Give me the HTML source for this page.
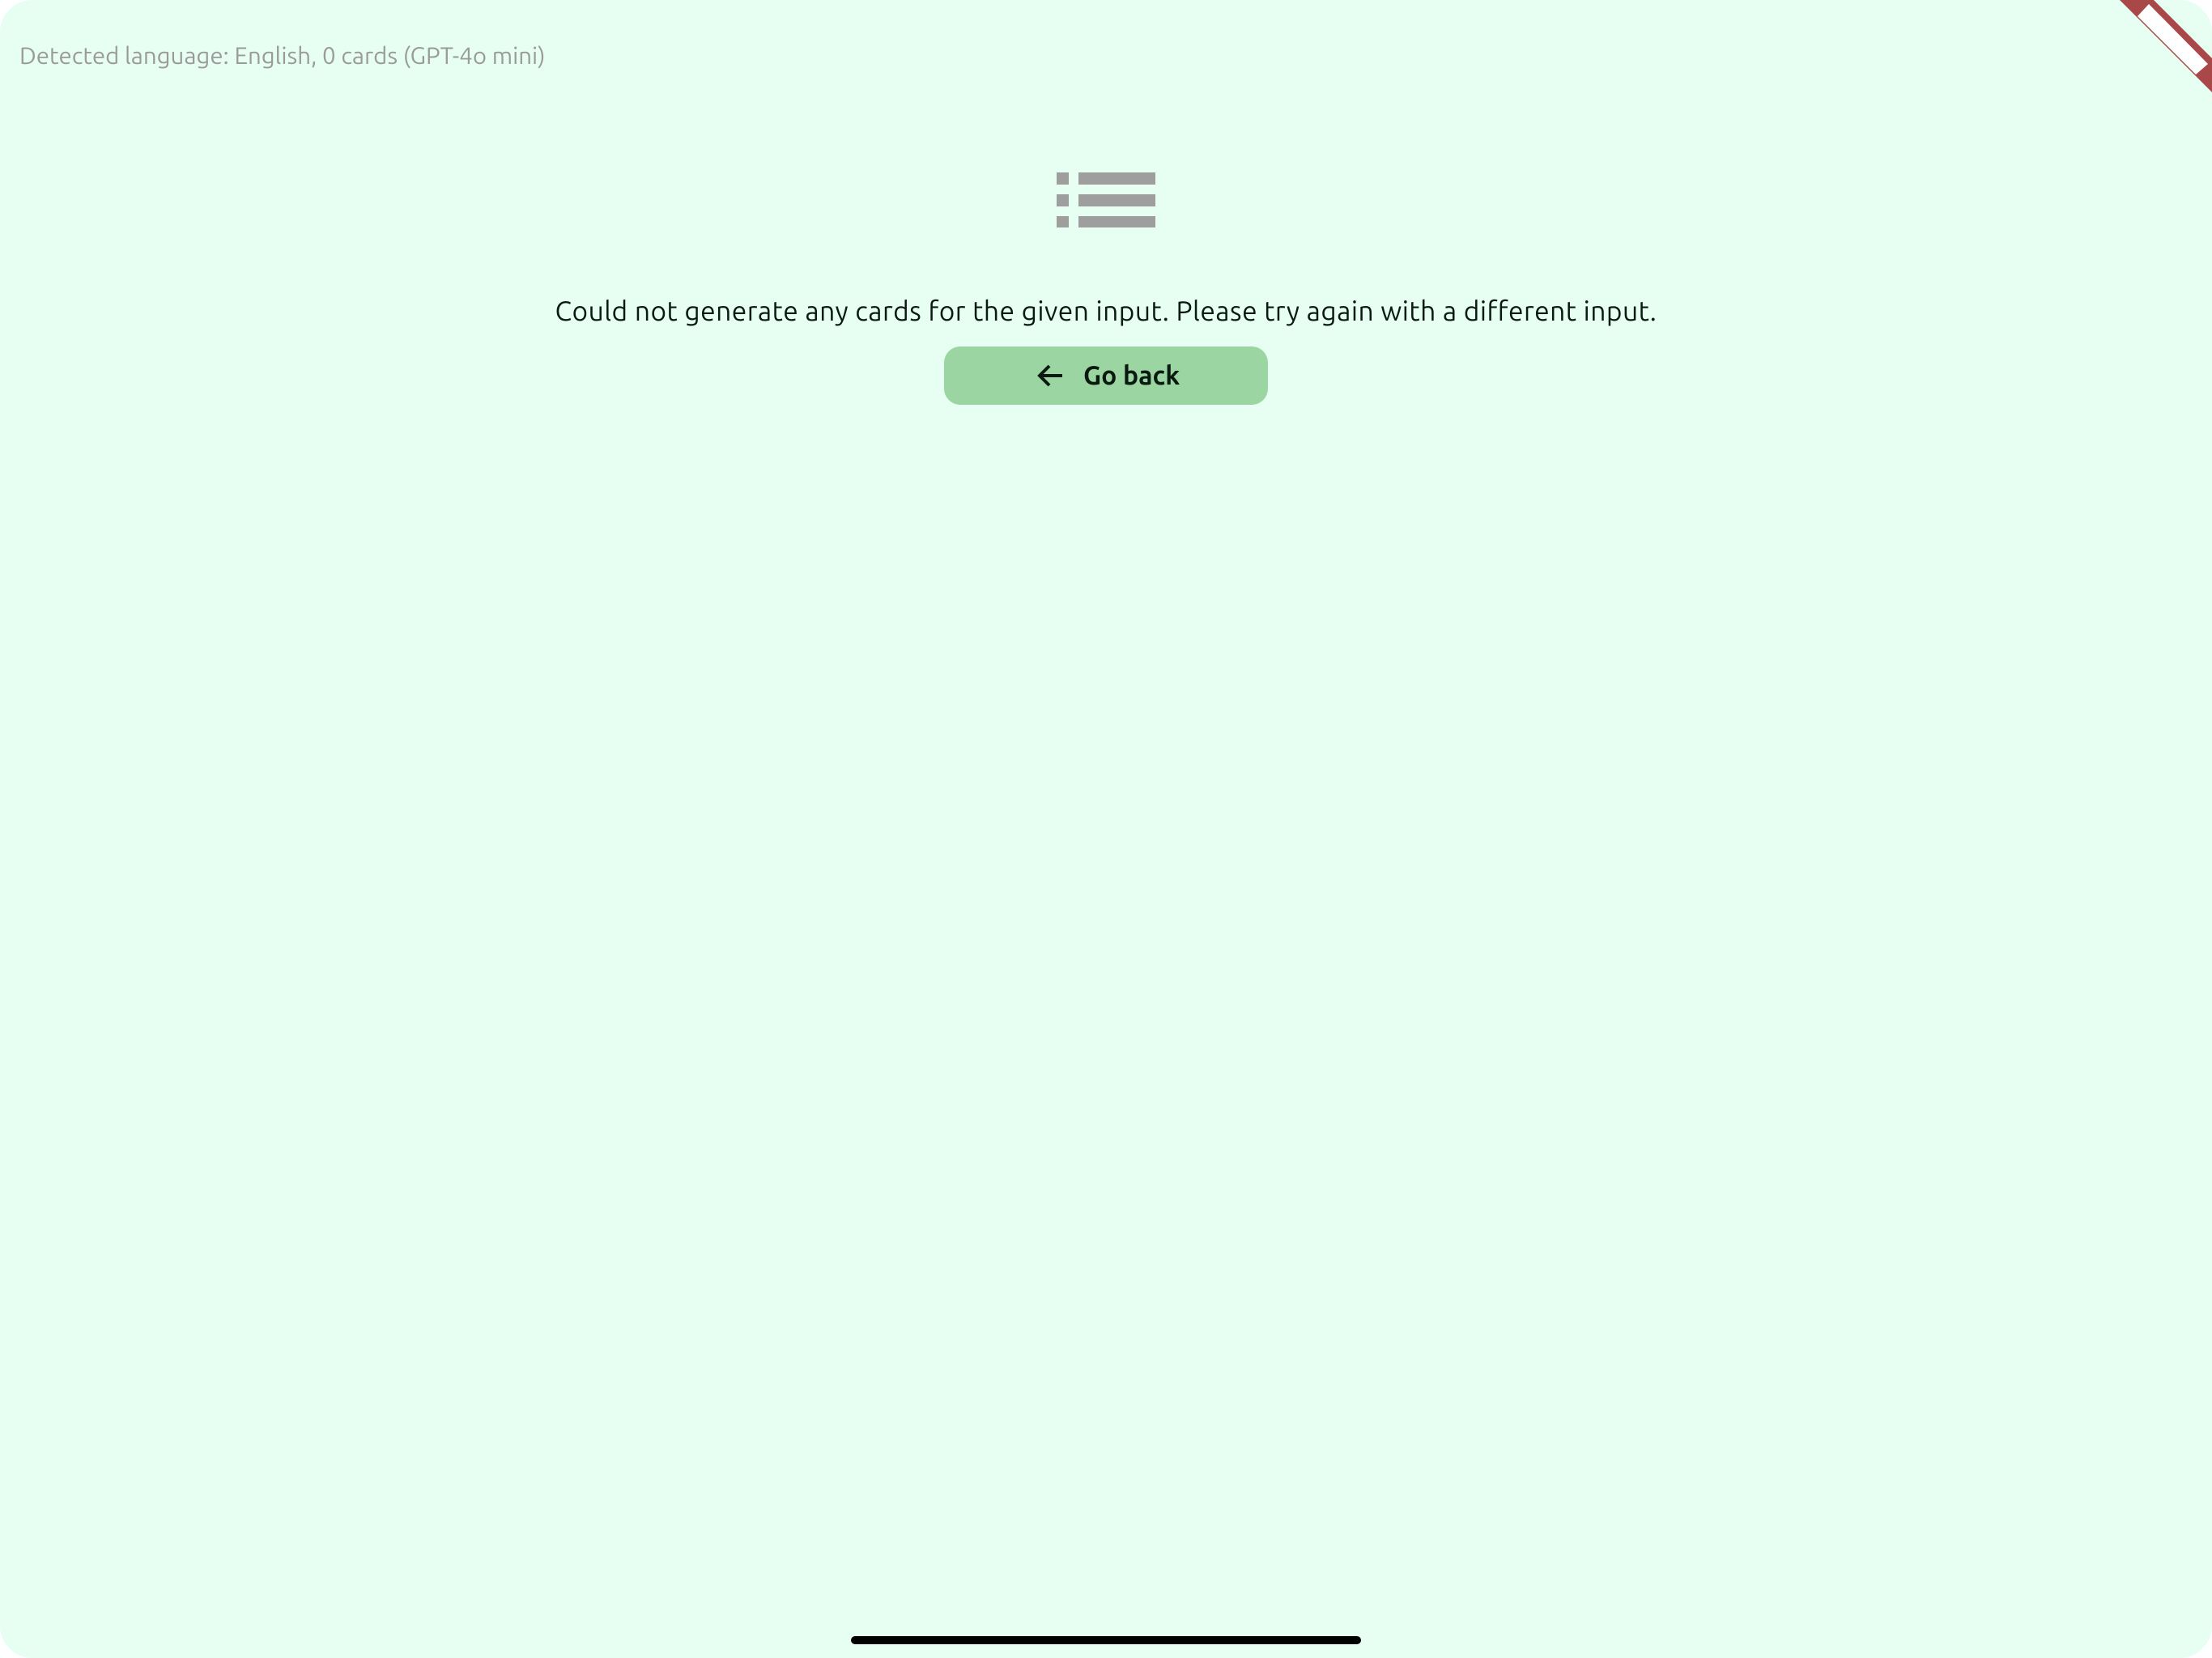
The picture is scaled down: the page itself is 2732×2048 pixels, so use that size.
<!DOCTYPE html>
<html><head><meta charset="utf-8"><style>
html,body{margin:0;padding:0;width:2732px;height:2048px;overflow:hidden;background:#fff;}
.page{position:absolute;left:0;top:0;width:2732px;height:2048px;background:#e6fff2;border-radius:40px;overflow:hidden;font-family:"Ubuntu","Liberation Sans",sans-serif;}
.hdr{position:absolute;left:24px;top:52px;font-size:29.4px;color:#9a9a9a;white-space:nowrap;}
.msg{position:absolute;left:0;width:2732px;top:366px;text-align:center;font-size:33.5px;color:#0a1a10;letter-spacing:0.5px;}
.btn{position:absolute;left:1166px;top:428px;width:400px;height:72px;background:#9ad5a2;border-radius:20px;}
.bl{position:absolute;font-size:32px;font-weight:bold;color:#0a1a10;left:172px;top:18px;}
.home{position:absolute;left:1051px;top:2021px;width:630px;height:10px;background:#000;border-radius:5px;}
</style></head><body>
<div class="page">
<div class="hdr">Detected language: English, 0 cards (GPT-4o mini)</div>
<svg style="position:absolute;left:0;top:0" width="2732" height="2048">
<g fill="#9e9e9e">
<rect x="1305" y="213" width="15" height="15"/><rect x="1332" y="213" width="95" height="15"/>
<rect x="1305" y="240" width="15" height="15"/><rect x="1332" y="240" width="95" height="15"/>
<rect x="1305" y="267" width="15" height="14"/><rect x="1332" y="267" width="95" height="14"/>
</g>
<polygon points="2618,0 2660,0 2732,72 2732,114" fill="#a84848"/>
<polygon points="2640,20 2654,5 2727,79 2712,92" fill="#fff"/>
</svg>
<div class="msg">Could not generate any cards for the given input. Please try again with a different input.</div>
<div class="btn">
<svg style="position:absolute;left:113px;top:18px" width="38" height="38" viewBox="0 0 38 38"><path d="M33 18H6M17 6L5 18L17 30" stroke="#0a1a10" stroke-width="4" fill="none"/></svg>
<div class="bl">Go back</div>
</div>
<div class="home"></div>
</div>
</body></html>
